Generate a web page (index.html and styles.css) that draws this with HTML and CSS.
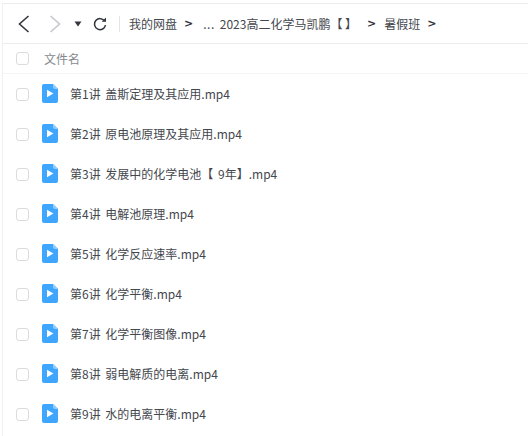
FILE: index.html
```html
<!DOCTYPE html>
<html lang="zh-CN">
<head>
    <meta charset="UTF-8">
    <title>暑假班</title>
    <link rel="stylesheet" href="styles.css">
</head>
<body>
<div class="page">
    <!-- Toolbar -->
    <div class="toolbar">
        <svg class="nav-icon back" width="14" height="20" viewBox="0 0 14 20"><path d="M11.5 2 L2.5 10 L11.5 18" fill="none" stroke="#33363d" stroke-width="1.6"/></svg>
        <svg class="nav-icon forward" width="14" height="20" viewBox="0 0 14 20"><path d="M2.5 2 L11.5 10 L2.5 18" fill="none" stroke="#c6c8cc" stroke-width="1.6"/></svg>
        <svg class="nav-icon caret" width="8" height="6" viewBox="0 0 8 6"><path d="M0.5 0.5 H7.5 L4 5.5 Z" fill="#33363d"/></svg>
        <svg class="nav-icon reload" width="14" height="14" viewBox="0 0 14 14"><path d="M11.6 4 A5.5 5.5 0 1 0 12.5 8" fill="none" stroke="#33363d" stroke-width="1.5"/><path d="M8.6 4.8 H13 V0.6 Z" fill="#33363d"/></svg>
        <span class="divider"></span>
        <div class="crumbs">
            <span>我的网盘</span><span class="sep">&gt;</span>
            <span class="more">...</span>
            <span class="crumb-long">2023高二化学马凯鹏【 】</span><span class="sep sep-wide">&gt;</span>
            <span>暑假班</span><span class="sep">&gt;</span>
        </div>
    </div>

    <!-- Column header -->
    <div class="list-head">
        <span class="check"></span>
        <span class="head-name">文件名</span>
    </div>

    <!-- File rows -->
    <div class="row">
        <span class="check"></span>
        <svg class="file-icon" width="16" height="19" viewBox="0 0 16 19"><use href="#video"/></svg>
        <span class="name">第1讲 盖斯定理及其应用.mp4</span>
    </div>
    <div class="row">
        <span class="check"></span>
        <svg class="file-icon" width="16" height="19" viewBox="0 0 16 19"><use href="#video"/></svg>
        <span class="name">第2讲 原电池原理及其应用.mp4</span>
    </div>
    <div class="row">
        <span class="check"></span>
        <svg class="file-icon" width="16" height="19" viewBox="0 0 16 19"><use href="#video"/></svg>
        <span class="name">第3讲 发展中的化学电池【 9年】.mp4</span>
    </div>
    <div class="row">
        <span class="check"></span>
        <svg class="file-icon" width="16" height="19" viewBox="0 0 16 19"><use href="#video"/></svg>
        <span class="name">第4讲 电解池原理.mp4</span>
    </div>
    <div class="row">
        <span class="check"></span>
        <svg class="file-icon" width="16" height="19" viewBox="0 0 16 19"><use href="#video"/></svg>
        <span class="name">第5讲 化学反应速率.mp4</span>
    </div>
    <div class="row">
        <span class="check"></span>
        <svg class="file-icon" width="16" height="19" viewBox="0 0 16 19"><use href="#video"/></svg>
        <span class="name">第6讲 化学平衡.mp4</span>
    </div>
    <div class="row">
        <span class="check"></span>
        <svg class="file-icon" width="16" height="19" viewBox="0 0 16 19"><use href="#video"/></svg>
        <span class="name">第7讲 化学平衡图像.mp4</span>
    </div>
    <div class="row">
        <span class="check"></span>
        <svg class="file-icon" width="16" height="19" viewBox="0 0 16 19"><use href="#video"/></svg>
        <span class="name">第8讲 弱电解质的电离.mp4</span>
    </div>
    <div class="row">
        <span class="check"></span>
        <svg class="file-icon" width="16" height="19" viewBox="0 0 16 19"><use href="#video"/></svg>
        <span class="name">第9讲 水的电离平衡.mp4</span>
    </div>
</div>

<svg class="defs" width="0" height="0">
    <symbol id="video" viewBox="0 0 16 19">
        <path d="M2 0 H11 L16 5 V17 A2 2 0 0 1 14 19 H2 A2 2 0 0 1 0 17 V2 A2 2 0 0 1 2 0 Z" fill="#3ea6ff"/>
        <path d="M11 0 L16 5 H13 A2 2 0 0 1 11 3 Z" fill="#8fcbff"/>
        <path d="M5 5.8 L11.5 9.5 L5 13.2 Z" fill="#fff"/>
    </symbol>
</svg>
</body>
</html>
```

FILE: styles.css
```css
html, body {
    margin: 0;
    padding: 0;
    background: #fff;
}

body {
    font-family: "Noto Sans CJK SC", "Liberation Sans", sans-serif;
    color: #44474e;
    overflow: hidden;
}

.page {
    height: 436px;
    margin-left: 2px;
    border-left: 1px solid #f0f0f0;
    border-top: 1px solid #ececec;
    margin-top: 3px;
    box-sizing: border-box;
    overflow: hidden;
}

.defs {
    display: none;
}

/* Toolbar */
.toolbar {
    display: flex;
    align-items: center;
    height: 39px;
    border-bottom: 1px solid #ececec;
}

.nav-icon {
    flex: none;
}

.back {
    margin-left: 14px;
}

.forward {
    margin-left: 17px;
}

.caret {
    margin-left: 12px;
}

.reload {
    margin-left: 11px;
}

.divider {
    width: 1px;
    height: 16px;
    background: #e4e4e4;
    margin-left: 12px;
}

.crumbs {
    display: flex;
    align-items: center;
    margin-left: 9px;
    font-size: 12px;
    white-space: nowrap;
}

.sep {
    margin: 0 7px;
    font-family: "DejaVu Sans", sans-serif;
    font-weight: bold;
    font-size: 11px;
    color: #33363d;
}

.sep-wide {
    margin: 0 8px 0 10px;
}

.more {
    margin-left: 3px;
    margin-right: 5px;
    letter-spacing: 0.5px;
}

/* List */
.list-head {
    display: flex;
    align-items: center;
    height: 29px;
    border-bottom: 1px solid #f5f5f5;
    font-size: 12px;
    color: #85888e;
}

.check {
    flex: none;
    width: 11px;
    height: 11px;
    margin-left: 13px;
    border: 1px solid #dcdcdc;
    border-radius: 3px;
}

.head-name {
    margin-left: 15px;
}

.row {
    display: flex;
    align-items: center;
    height: 40px;
    font-size: 12px;
}

.file-icon {
    flex: none;
    margin-left: 13px;
    margin-bottom: 1px;
}

.name {
    margin-left: 12px;
    margin-bottom: 2px;
    white-space: nowrap;
    word-spacing: 2px;
}
```
